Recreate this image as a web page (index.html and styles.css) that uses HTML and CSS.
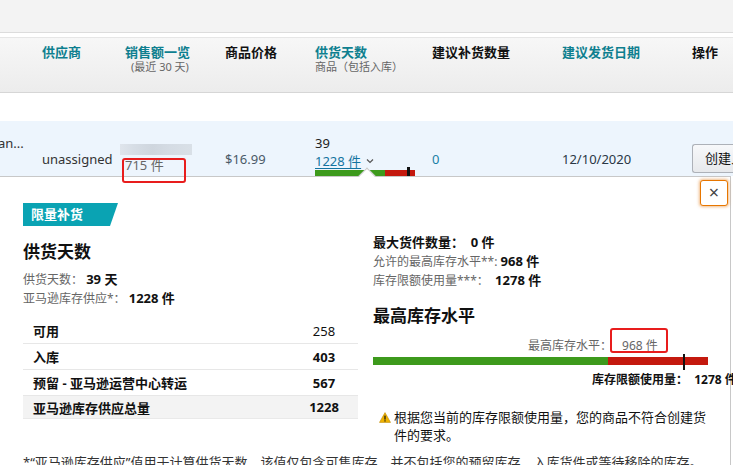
FILE: index.html
```html
<!DOCTYPE html>
<html lang="zh-CN">
<head>
<meta charset="utf-8">
<title>补货</title>
<link rel="stylesheet" href="styles.css">
</head>
<body>
<div class="topbar"></div>
<div class="thead">
  <div class="th"></div>
  <div class="th"><span class="t teal">供应商</span></div>
  <div class="th"><span class="t teal">销售额一览</span><span class="sub sub-sales">(最近 30 天)</span></div>
  <div class="th"><span class="t">商品价格</span></div>
  <div class="th"><span class="t teal">供货天数</span><span class="sub">商品（包括入库）</span></div>
  <div class="th"><span class="t">建议补货数量</span></div>
  <div class="th"><span class="t teal">建议发货日期</span></div>
  <div class="th"><span class="t">操作</span></div>
</div>
<div class="row">
  <div class="td"><span class="line cut">an...</span></div>
  <div class="td"><span class="line l2 dark">unassigned</span></div>
  <div class="td sales">
    <div class="blur"></div>
    <span class="line units">715 件</span>
    <div class="redbox redbox-sales"></div>
  </div>
  <div class="td"><span class="line l2 price">$16.99</span></div>
  <div class="td">
    <span class="line">39</span>
    <span class="line"><span class="link">1228 件</span><span class="chev">
      <svg width="8" height="6" viewBox="0 0 8 6"><path d="M1 1.5 L4 4.5 L7 1.5" fill="none" stroke="#555" stroke-width="1.2"/></svg></span></span>
    <div class="rowbar"><div class="g"></div><div class="r"></div><div class="tick"></div></div>
  </div>
  <div class="td"><span class="line l2 num">0</span></div>
  <div class="td"><span class="line l2 date">12/10/2020</span></div>
  <div class="td"><div class="btn">创建入库货件</div></div>
</div>
<div class="popup">
  <div class="notch"></div>
  <div class="close">×</div>
  <div class="badge">限量补货</div>
  <div class="cols">
    <div class="col left">
      <h2 class="h2 h2-left">供货天数</h2>
      <div class="kv kv-first"><span class="lbl">供货天数：</span> <b>39 天</b></div>
      <div class="kv"><span class="lbl">亚马逊库存供应*：</span> <b>1228 件</b></div>
      <div class="tbl">
        <div class="tr"><span class="name">可用</span><span class="val plain">258</span></div>
        <div class="tr"><span class="name">入库</span><span class="val">403</span></div>
        <div class="tr"><span class="name">预留 - 亚马逊运营中心转运</span><span class="val">567</span></div>
        <div class="tr total"><span class="name">亚马逊库存供应总量</span><span class="val">1228</span></div>
      </div>
    </div>
    <div class="col right">
      <div class="rk strong">最大货件数量：&nbsp; 0 件</div>
      <div class="rk"><span class="lbl">允许的最高库存水平**:</span> <b>968 件</b></div>
      <div class="rk"><span class="lbl">库存限额使用量***：</span>&nbsp; <b>1278 件</b></div>
      <h2 class="h2 h2-right">最高库存水平</h2>
      <div class="maxline"><span class="lbl">最高库存水平：</span><span class="maxval">968 件</span><div class="redbox redbox-max"></div></div>
      <div class="bigbar"><div class="g"></div><div class="r"></div><div class="tick"></div></div>
      <div class="usage">库存限额使用量：&nbsp; 1278 件</div>
      <div class="warn">
        <svg class="warn-ico" width="12" height="11" viewBox="0 0 12 11"><path d="M6 0.6 L11.5 10.4 L0.5 10.4 Z" fill="#f0b400" stroke="#c08a00" stroke-width="0.6"/><rect x="5.4" y="3.6" width="1.2" height="4" fill="#111"/><rect x="5.4" y="8.3" width="1.2" height="1.2" fill="#111"/></svg>
        <span class="warn-text">根据您当前的库存限额使用量，您的商品不符合创建货件的要求。</span>
      </div>
    </div>
  </div>
  <div class="foot">*“亚马逊库存供应”值用于计算供货天数，该值仅包含可售库存，并不包括您的预留库存，入库货件或等待移除的库存。</div>
</div>
</body>
</html>
```
FILE: styles.css
```css
* { box-sizing: border-box; }
html, body { margin: 0; padding: 0; }
body {
  width: 733px;
  height: 465px;
  overflow: hidden;
  background: #fff;
  color: #111;
  font-family: "Noto Sans", "Noto Sans CJK SC", sans-serif;
  font-size: 13px;
}
.topbar {
  height: 33px;
  background: #f3f3f3;
  border-bottom: 1px solid #dcdcdc;
}
.thead, .row {
  display: grid;
  grid-template-columns: 42px 83px 100px 90px 117px 130px 130px 1fr;
}
.thead {
  margin-top: 4px;
  height: 56px;
  background: linear-gradient(#f7f7f7, #ececec);
  border-top: 1px solid #e6e6e6;
  border-bottom: 1px solid #d6d6d6;
}
.th {
  padding-top: 7px;
  display: flex;
  flex-direction: column;
  white-space: nowrap;
}
.th .t {
  font-weight: 700;
  font-size: 13px;
  line-height: 15px;
  color: #111;
}
.th .t.teal { color: #0e7f8f; }
.sub {
  font-size: 11px;
  line-height: 13px;
  color: #666;
}
.sub-sales { padding-left: 6px; }

.row {
  margin-top: 28px;
  height: 55px;
  background: #edf5fd;
}
.td {
  padding-top: 14px;
  display: flex;
  flex-direction: column;
  white-space: nowrap;
  position: relative;
}
.line {
  display: block;
  line-height: 16px;
  font-size: 13px;
  color: #222;
}
.l2 { margin-top: 16px; }
.cut { color: #333; margin-left: -2px; }
.dark { color: #333; }
.price { color: #4a5a68; }
.num { color: #1a7fa6; }
.date { color: #2a3745; }
.sales .blur {
  margin-top: 9px;
  width: 72px;
  margin-left: -5px;
  height: 11px;
  background: linear-gradient(90deg, #dfe5ec 0, #d6dde5 20%, #cfd6de 45%, #d5dce4 70%, #d9e0e7 100%);
}
.units { margin-top: 2px; color: #666; }
.redbox {
  position: absolute;
  border: 2px solid #e81d1d;
  border-radius: 3px;
  z-index: 5;
}
.redbox-sales { left: -3px; top: 37px; width: 64px; height: 25px; }
.link {
  color: #1474a0;
  text-decoration: underline;
  text-underline-offset: 2px;
}
.chev { display: inline-block; margin-left: 5px; vertical-align: 2px; }
.rowbar {
  margin-top: 1px;
  width: 100px;
  height: 6px;
  display: flex;
  position: relative;
}
.rowbar .g { width: 70px; background: #3d9a1c; }
.rowbar .r { flex: 1; background: #c4190e; }
.rowbar .tick {
  position: absolute;
  left: 92px;
  top: -3px;
  width: 3px;
  height: 10px;
  background: #111;
}
.btn {
  margin-top: 9px;
  height: 29px;
  width: 70px;
  border: 1px solid #adb1b8;
  border-right: none;
  border-radius: 3px 0 0 3px;
  background: linear-gradient(#f7f8fa, #e7e9ec);
  padding-left: 12px;
  line-height: 27px;
  font-size: 13px;
  color: #111;
  overflow: hidden;
  white-space: nowrap;
}

.popup {
  position: relative;
  width: 731px;
  height: 300px;
  background: #fff;
  border-top: 1px solid #c8c8c8;
  border-right: 1px solid #c8c8c8;
  padding: 26px 0 0 23px;
}
.notch {
  position: absolute;
  left: 361px;
  top: -7px;
  width: 12px;
  height: 12px;
  background: #fff;
  border-top: 1px solid #c8c8c8;
  border-left: 1px solid #c8c8c8;
  transform: rotate(45deg);
}
.close {
  position: absolute;
  right: 2px;
  top: 3px;
  width: 28px;
  height: 26px;
  border: 1px solid #e77600;
  border-radius: 3px;
  box-shadow: 0 0 3px 1px rgba(228, 121, 17, 0.5);
  text-align: center;
  line-height: 23px;
  font-size: 18px;
  color: #444;
  background: #fff;
}
.badge {
  width: 95px;
  height: 23px;
  background: #0aa3b3;
  clip-path: polygon(0 0, 100% 0, 91.6% 100%, 0 100%);
  color: #fff;
  font-weight: 700;
  font-size: 13px;
  line-height: 23px;
  padding-left: 8px;
}
.cols {
  margin-top: 7px;
  display: flex;
  gap: 15px;
}
.col { width: 335px; }
.h2 {
  margin: 0;
  font-size: 17px;
  line-height: 22px;
  font-weight: 700;
  color: #111;
}
.h2-left { margin-top: 8px; }
.kv {
  line-height: 18px;
  font-size: 12px;
  white-space: nowrap;
}
.kv-first { margin-top: 7px; }
.kv b { font-size: 13px; font-weight: 700; color: #111; }
.lbl { color: #666; font-size: 12px; }
.tbl { margin-top: 10px; }
.tr {
  display: flex;
  align-items: center;
  height: 26px;
  border-bottom: 1px solid #e7e7e7;
  padding-left: 10px;
  font-size: 13px;
  font-weight: 700;
}
.tr .name { flex: 1; }
.tr .val { width: 50px; margin-right: 9px; text-align: center; }
.tr .val.plain { font-weight: 400; }
.tr.total {
  height: 23px;
  background: #f3f3f3;
  border-bottom: 1px solid #e9e9e9;
}
.rk {
  line-height: 19px;
  font-size: 12px;
  white-space: nowrap;
}
.rk.strong { font-size: 13px; font-weight: 700; }
.rk b { font-size: 13px; font-weight: 700; }
.h2-right { margin-top: 15px; }
.maxline {
  position: relative;
  margin-top: 9px;
  margin-left: 155px;
  line-height: 18px;
  white-space: nowrap;
}
.maxline .lbl { font-size: 12px; color: #666; }
.maxval { color: #666; font-size: 12px; margin-left: 10px; }
.redbox-max { left: 82px; top: -8px; width: 58px; height: 25px; }
.bigbar {
  position: relative;
  margin-top: 2px;
  height: 8px;
  width: 335px;
  display: flex;
}
.bigbar .g { width: 235px; background: #3d9a1c; }
.bigbar .r { flex: 1; background: #c4190e; }
.bigbar .tick {
  position: absolute;
  left: 310px;
  top: -3px;
  width: 2px;
  height: 16px;
  background: #111;
}
.usage {
  margin-top: 6px;
  margin-left: 219px;
  line-height: 18px;
  font-size: 12px;
  font-weight: 700;
  white-space: nowrap;
}
.warn {
  margin-top: 19px;
  padding-left: 6px;
  display: flex;
  align-items: flex-start;
}
.warn-ico { margin-top: 4px; flex: none; margin-right: 3px; }
.warn-text {
  width: 315px;
  line-height: 18px;
  font-size: 13px;
  color: #111;
}
.foot {
  margin-top: 9px;
  line-height: 18px;
  font-size: 13px;
  color: #333;
  white-space: nowrap;
}
```
